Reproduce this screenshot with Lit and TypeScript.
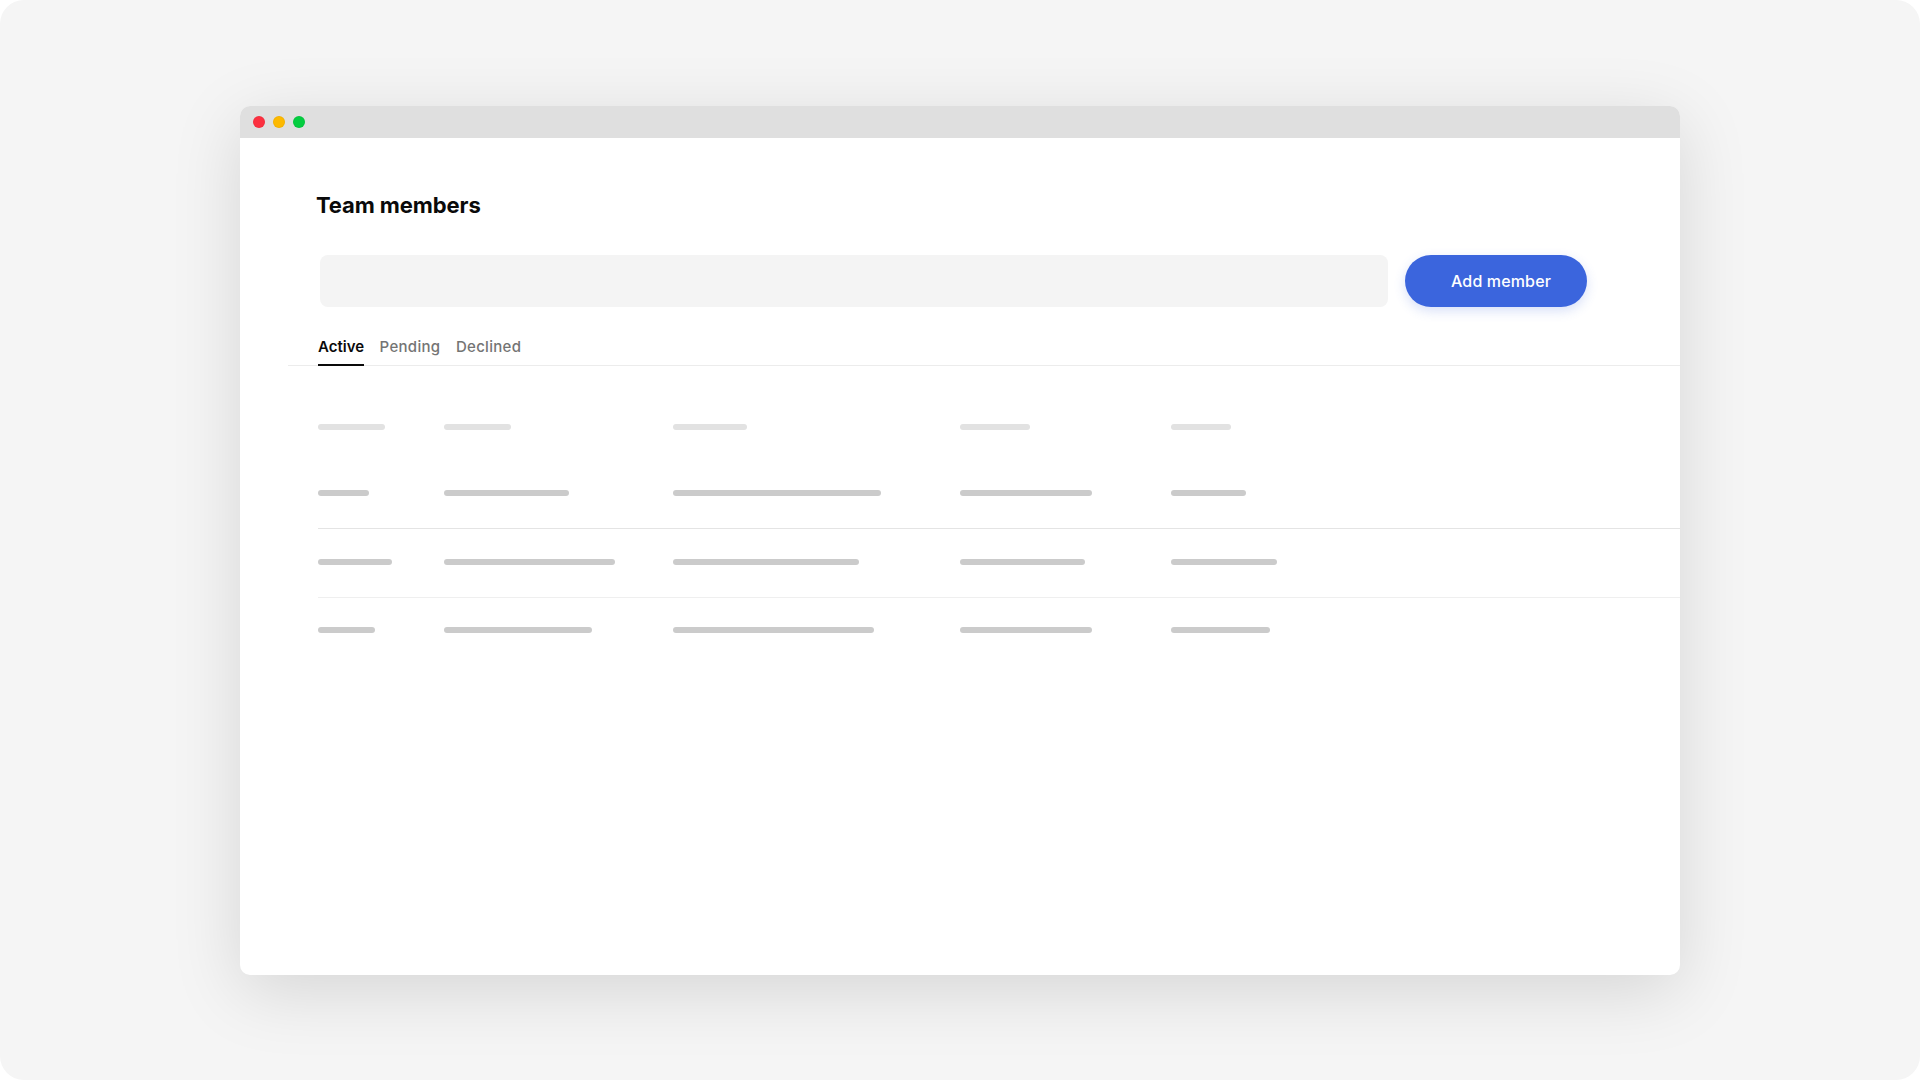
import { LitElement, html, css } from "lit";
import { customElement } from "lit/decorators.js";

const header = [67, 67, 74, 70, 60];
const rows = [
  [51, 125, 208, 132, 75],
  [74, 171, 186, 125, 106],
  [57, 148, 201, 132, 99],
];

@customElement("app-root")
export class AppRoot extends LitElement {
  static styles = css`
    :host { display: block; background: #fff; font-family: Inter, "Liberation Sans", sans-serif; }
    .page { width: 1920px; height: 1080px; box-sizing: border-box; background: #f5f5f5; border-radius: 24px; padding: 106px 240px 105px; overflow: hidden; }
    .window { height: 869px; background: #fff; border-radius: 10px; box-shadow: 0 16px 70px rgba(0,0,0,.13); display: flex; flex-direction: column; overflow: hidden; }
    .titlebar { height: 32px; flex: none; background: #dfdfdf; display: flex; align-items: center; gap: 8px; padding-left: 13px; padding-bottom: 1px; box-sizing: border-box; }
    .dot { width: 12px; height: 12px; border-radius: 50%; box-sizing: border-box; border: 1px solid rgba(0,0,0,.04); }
    .red { background: #fc3040; } .yellow { background: #fdb900; } .green { background: #04cd40; }
    .content { flex: 1; padding: 0 0 0 48px; }
    h1 { margin: 0; padding: 52px 0 0 28px; font-size: 22px; line-height: 30px; font-weight: 700; color: #0a0a0a; letter-spacing: -.1px; }
    .actions { display: flex; gap: 17px; padding: 35px 0 0 32px; }
    .input { width: 1068px; height: 52px; border-radius: 8px; background: #f4f4f4; }
    .btn { width: 182px; height: 52px; border-radius: 26px; border: 0; background: #3b65dd; color: #fff; font: 500 16px Inter, "Liberation Sans", sans-serif; letter-spacing: .15px; padding: 0 0 0 10px; box-shadow: 0 4px 12px rgba(59,101,221,.2); }
    .tabs { display: flex; gap: 15.5px; margin-top: 24px; padding-left: 30px; height: 34px; border-bottom: 1px solid #ececec; }
    .tab { font-size: 15px; font-weight: 500; letter-spacing: .3px; line-height: 32px; height: 34px; box-sizing: border-box; color: #747474; }
    .tab.active { color: #0a0a0a; font-weight: 600; letter-spacing: 0; border-bottom: 2px solid #0a0a0a; height: 35px; }
    .table { padding: 58px 0 0 30px; }
    .row { display: grid; grid-template-columns: 126px 229px 287px 211px 1fr; align-items: center; height: 69px; box-sizing: border-box; padding-bottom: 2px; border-bottom: 1px solid #e4e4e4; }
    .row:nth-child(3) { border-bottom-color: #efefef; }
    .row:last-child { border-bottom: 0; padding-bottom: 5px; }
    .row.head { height: 6px; padding: 0; margin-bottom: 30px; border-bottom: 0; }
    .bar { height: 6px; border-radius: 3px; background: #cbcbcb; }
    .head .bar { background: #e2e2e2; }
  `;

  private bars(widths: number[]) {
    return widths.map((w) => html`<div class="bar" style="width:${w}px"></div>`);
  }

  render() {
    return html`
      <div class="page">
        <div class="window">
          <div class="titlebar"><span class="dot red"></span><span class="dot yellow"></span><span class="dot green"></span></div>
          <div class="content">
            <h1>Team members</h1>
            <div class="actions"><div class="input"></div><button class="btn">Add member</button></div>
            <div class="tabs"><span class="tab active">Active</span><span class="tab">Pending</span><span class="tab">Declined</span></div>
            <div class="table">
              <div class="row head">${this.bars(header)}</div>
              ${rows.map((r) => html`<div class="row">${this.bars(r)}</div>`)}
            </div>
          </div>
        </div>
      </div>
    `;
  }
}
